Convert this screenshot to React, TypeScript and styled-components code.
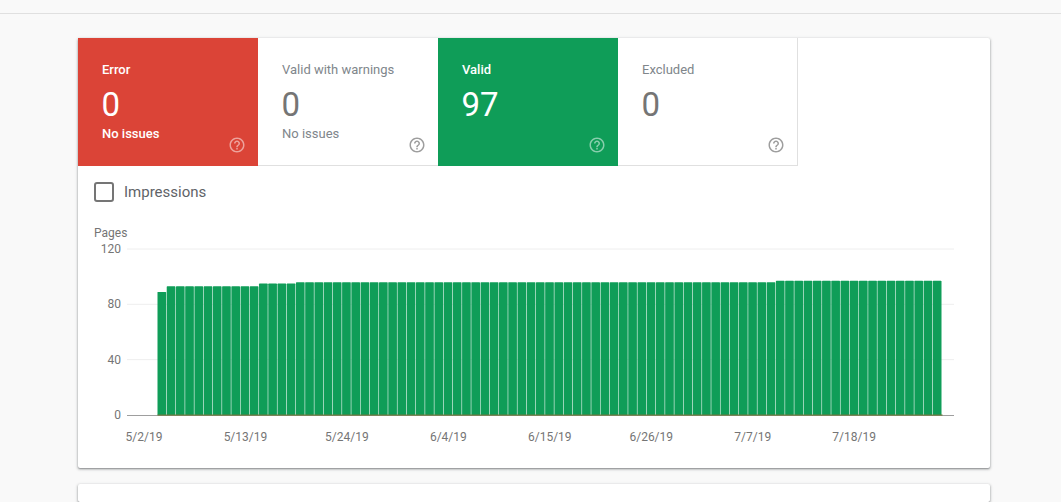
import styled, { createGlobalStyle } from "styled-components";

const GlobalStyle = createGlobalStyle`
  html, body {
    margin: 0;
    padding: 0;
    height: 100%;
    overflow: hidden;
    background: #f9f9f9;
    font-family: Roboto, "Liberation Sans", sans-serif;
  }
`;

const GREEN = "#0f9d58";
const RED = "#db4437";

type TileData = {
  title: string;
  count: number;
  note?: string;
  color?: string;
};

const tiles: TileData[] = [
  { title: "Error", count: 0, note: "No issues", color: RED },
  { title: "Valid with warnings", count: 0, note: "No issues" },
  { title: "Valid", count: 97, color: GREEN },
  { title: "Excluded", count: 0 },
];

// pages per day, 85 days from 5/2/19
const values = [
  89,
  ...Array(10).fill(93),
  ...Array(4).fill(95),
  ...Array(52).fill(96),
  ...Array(18).fill(97),
];

const gridLines = [120, 80, 40];
const dates = ["5/2/19", "5/13/19", "5/24/19", "6/4/19", "6/15/19", "6/26/19", "7/7/19", "7/18/19"];

const BAR_LEFT = 79.5;
const BAR_PITCH = 9.23;
const ZERO_Y = 193;
const UNIT = 1.3833;

export default function App() {
  return (
    <>
      <GlobalStyle />
      <TopBar />
      <Main>
        <Card>
          <TileRow>
            {tiles.map((tile) => (
              <Tile key={tile.title} $color={tile.color}>
                <TileTitle $filled={!!tile.color}>{tile.title}</TileTitle>
                <TileCount $filled={!!tile.color}>{tile.count}</TileCount>
                <TileNote $filled={!!tile.color}>{tile.note}</TileNote>
                <HelpIcon $filled={!!tile.color} viewBox="0 0 24 24">
                  <path d="M11 18h2v-2h-2v2zm1-16C6.48 2 2 6.48 2 12s4.48 10 10 10 10-4.48 10-10S17.52 2 12 2zm0 18c-4.41 0-8-3.59-8-8s3.59-8 8-8 8 3.59 8 8-3.59 8-8 8zm0-14c-2.21 0-4 1.79-4 4h2c0-1.1.9-2 2-2s2 .9 2 2c0 2-3 1.75-3 5h2c0-2.25 3-2.5 3-5 0-2.21-1.79-4-4-4z" />
                </HelpIcon>
              </Tile>
            ))}
          </TileRow>
          <MetricRow>
            <CheckBox />
            <MetricLabel>Impressions</MetricLabel>
          </MetricRow>
          <Chart width={912} height={246} viewBox="0 0 912 246">
            <AxisText x={16} y={15}>
              Pages
            </AxisText>
            {gridLines.map((v) => (
              <line key={v} x1={49} x2={876} y1={ZERO_Y - v * UNIT} y2={ZERO_Y - v * UNIT} stroke="#eeeeee" />
            ))}
            {[...gridLines, 0].map((v) => (
              <AxisText key={v} x={43} y={ZERO_Y - v * UNIT + 4} textAnchor="end">
                {v}
              </AxisText>
            ))}
            <line x1={49} x2={876} y1={ZERO_Y + 0.5} y2={ZERO_Y + 0.5} stroke="#9e9e9e" />
            {values.map((v, i) => (
              <rect
                key={i}
                x={BAR_LEFT + i * BAR_PITCH}
                y={ZERO_Y - v * UNIT}
                width={BAR_PITCH - 0.55}
                height={v * UNIT}
                rx={0.6}
                fill={GREEN}
              />
            ))}
            <rect x={BAR_LEFT} y={ZERO_Y - 0.5} width={785} height={1.2} fill="#6d7a3c" />
            {dates.map((d, i) => (
              <AxisText key={d} x={66 + i * 101.45} y={219} textAnchor="middle">
                {d}
              </AxisText>
            ))}
          </Chart>
        </Card>
        <Card $tall />
      </Main>
    </>
  );
}

const TopBar = styled("div")`
  height: 13px;
  border-bottom: 1px solid #e0e0e0;
`;

const Main = styled("main")`
  display: flex;
  flex-direction: column;
  row-gap: 16px;
  padding: 24px 71px 0 78px;
`;

const Card = styled("section")<{ $tall?: boolean }>`
  background-color: #fff;
  border-radius: 2px;
  box-shadow: 0 1px 2px rgba(60, 64, 67, 0.55), 0 1px 3px 1px rgba(60, 64, 67, 0.12);
  min-height: ${({ $tall }) => ($tall ? "18px" : "0")};
`;

const TileRow = styled("div")`
  display: flex;
  width: 720px;
  height: 128px;
  box-sizing: border-box;
  border-bottom: 1px solid #e0e0e0;
`;

const Tile = styled("div")<{ $color?: string }>`
  position: relative;
  flex: none;
  box-sizing: border-box;
  width: 180px;
  height: 128px;
  padding: 24px 0 0 24px;
  background-color: ${({ $color }) => $color ?? "transparent"};

  &:last-child {
    border-right: 1px solid #e0e0e0;
  }
`;

const TileTitle = styled("div")<{ $filled: boolean }>`
  font-size: 13px;
  line-height: 16px;
  font-weight: ${({ $filled }) => ($filled ? 500 : 400)};
  color: ${({ $filled }) => ($filled ? "#fff" : "#80868b")};
`;

const TileCount = styled("div")<{ $filled: boolean }>`
  font-size: 33px;
  line-height: 40px;
  margin: 7px 0 0 -0.5px;
  color: ${({ $filled }) => ($filled ? "#fff" : "#757575")};
`;

const TileNote = styled("div")<{ $filled: boolean }>`
  font-size: 13px;
  line-height: 16px;
  margin-top: 1px;
  font-weight: ${({ $filled }) => ($filled ? 500 : 400)};
  color: ${({ $filled }) => ($filled ? "#fff" : "#80868b")};
`;

const HelpIcon = styled("svg")<{ $filled: boolean }>`
  position: absolute;
  right: 12.5px;
  bottom: 12px;
  width: 18px;
  height: 18px;
  fill: ${({ $filled }) => ($filled ? "rgba(255, 255, 255, 0.5)" : "#9e9e9e")};
`;

const MetricRow = styled("div")`
  display: flex;
  align-items: center;
  column-gap: 10px;
  box-sizing: border-box;
  height: 56px;
  padding: 0 0 4px 16px;
`;

const CheckBox = styled("span")`
  box-sizing: border-box;
  width: 20px;
  height: 20px;
  border: 2px solid #757575;
  border-radius: 3px;
`;

const MetricLabel = styled("span")`
  font-size: 15px;
  color: #5f6368;
`;

const Chart = styled("svg")`
  display: block;
`;

const AxisText = styled("text")`
  font-family: Roboto, "Liberation Sans", sans-serif;
  font-size: 12px;
  fill: #757575;
`;
